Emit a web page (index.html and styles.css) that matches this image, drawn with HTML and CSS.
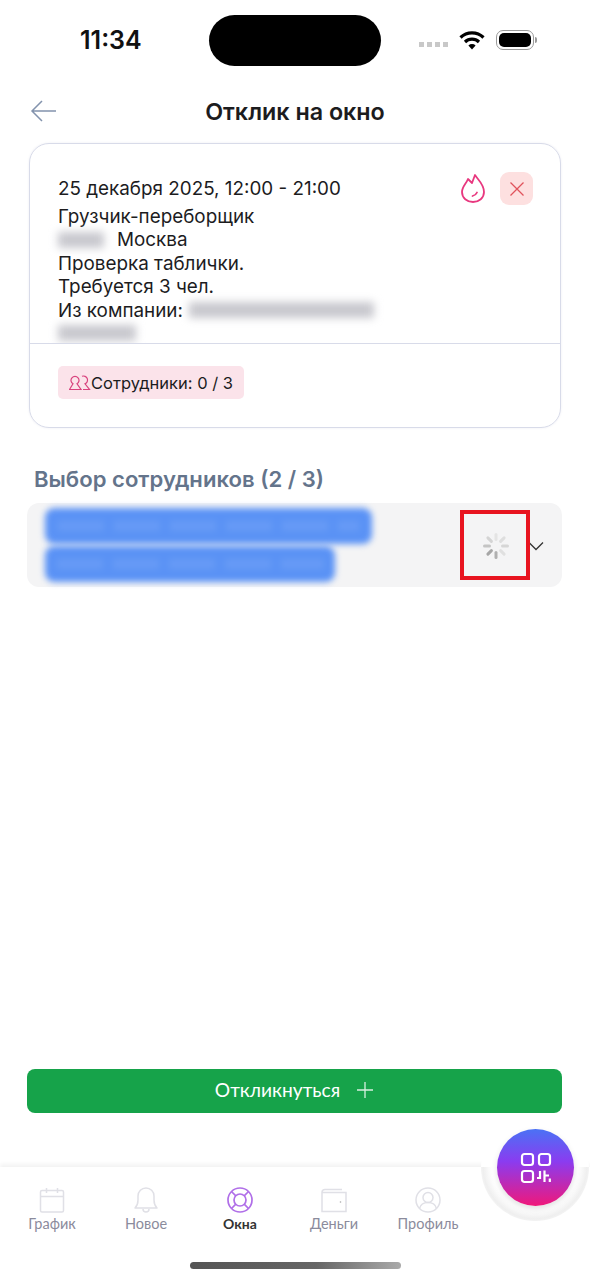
FILE: index.html
```html
<!DOCTYPE html>
<html lang="ru">
<head>
  <meta charset="UTF-8" />
  <meta name="viewport" content="width=device-width, initial-scale=1.0"/>
  <title>Отклик на окно</title>
  <link rel="stylesheet" href="styles.css">
</head>
<body>
  <div class="screen">
    <div class="status-bar">
      <span class="time">11:34</span>
      <div class="island"></div>
      <div class="status-icons">
        <div class="signal"><i></i><i></i><i></i><i></i></div>
        <svg class="wifi" width="26" height="19" viewBox="0 0 26 19">
          <path d="M1.500 6.500a16.500 16.500 0 0 1 23 0" fill="none" stroke="#000" stroke-width="3.200"/>
          <path d="M6 11a10.200 10.200 0 0 1 14 0" fill="none" stroke="#000" stroke-width="3.200"/>
          <path d="M9.400 14.400a5.300 5.300 0 0 1 7.200 0L13 18.600z" fill="#000"/>
        </svg>
        <div class="battery"><div class="battery-fill"></div></div>
        <div class="battery-cap"></div>
      </div>
    </div>

    <div class="header">
      <svg class="back" width="27" height="24" viewBox="0 0 27 24">
        <path d="M26 12H2M12 2L2 12l10 10" fill="none" stroke="#8393ad" stroke-width="1.500"/>
      </svg>
      <h1>Отклик на окно</h1>
    </div>

    <div class="card">
      <div class="card-body">
        <div class="card-top">
          <div class="date">25 декабря 2025, 12:00 - 21:00</div>
          <div class="card-actions">
            <svg width="24" height="30" viewBox="0 0 24 30">
              <path d="M7 5l4 4 3-8c3 5 9 9 9 17 0 6-5 10-11 10S1 24 1 18c0-5 4-8 6-13z" fill="none" stroke="#e8387f" stroke-width="1.800" stroke-linejoin="round"/>
              <path d="M16 18.500c-.8 1.800-2.500 3-4.500 3.500" fill="none" stroke="#e8387f" stroke-width="1.800" stroke-linecap="round"/>
            </svg>
            <div class="close-btn">
              <svg width="16" height="16" viewBox="0 0 16 16">
                <path d="M1.500 1.500l13 13M14.500 1.500l-13 13" stroke="#e0535c" stroke-width="1.300" fill="none"/>
              </svg>
            </div>
          </div>
        </div>
        <div class="line">Грузчик-переборщик</div>
        <div class="line"><span class="blur blur-city"></span>Москва</div>
        <div class="line">Проверка таблички.</div>
        <div class="line">Требуется 3 чел.</div>
        <div class="line">Из компании:<span class="blur blur-company"></span></div>
        <div class="line line-cut"><span class="blur blur-company2"></span></div>
      </div>
      <div class="card-foot">
        <div class="chip">
          <svg width="22" height="16" viewBox="0 0 22 16">
            <g fill="none" stroke="#d9437e" stroke-width="1.200">
              <path d="M4 8.800a4 4 0 1 1 4 0l4 5.700H0.500z"/>
              <path d="M13 1.300a4 4 0 0 1 3 7.500l4.500 5.700H14"/>
            </g>
          </svg>
          <span>Сотрудники: 0 / 3</span>
        </div>
      </div>
    </div>

    <h2 class="section-title">Выбор сотрудников (2 / 3)</h2>

    <div class="select">
      <div class="tags">
        <div class="tag tag-first"></div>
        <div class="tag tag-second"></div>
      </div>
      <div class="spinner">
        <svg width="28" height="28" viewBox="0 0 28 28">
          <g stroke-width="3" stroke-linecap="round" fill="none">
            <path d="M14 2.500v5" stroke="#e4e4e4"/>
            <path d="M22.100 5.900l-3.500 3.500" stroke="#dedede"/>
            <path d="M25.500 14h-5" stroke="#d6d6d6"/>
            <path d="M22.100 22.100l-3.500-3.500" stroke="#e0e0e0"/>
            <path d="M14 25.500v-5" stroke="#b0b0b0"/>
            <path d="M5.900 22.100l3.500-3.500" stroke="#a6a6a6"/>
            <path d="M2.500 14h5" stroke="#c4c4c4"/>
            <path d="M5.900 5.900l3.500 3.500" stroke="#d4d4d4"/>
          </g>
        </svg>
      </div>
      <svg class="chevron" width="16" height="10" viewBox="0 0 16 10">
        <path d="M1 1.500l7 7 7-7" fill="none" stroke="#333" stroke-width="1.300"/>
      </svg>
      <div class="marker"></div>
    </div>

    <div class="spacer"></div>

    <button class="submit-btn">Откликнуться
      <svg width="18" height="18" viewBox="0 0 18 18">
        <path d="M9 1v16M1 9h16" stroke="#d8f0e0" stroke-width="1.300" fill="none"/>
      </svg>
    </button>

    <div class="tabbar">
      <div class="tab">
        <svg width="26" height="26" viewBox="0 0 26 26">
          <rect x="1.500" y="3.500" width="23" height="21.500" rx="1.500" fill="none" stroke="#e0e0e6" stroke-width="1.500"/>
          <path d="M1.500 9.500h23M7.500 1v5M18.500 1v5" fill="none" stroke="#e0e0e6" stroke-width="1.500"/>
        </svg>
        <span>График</span>
      </div>
      <div class="tab">
        <svg width="26" height="26" viewBox="0 0 26 26">
          <path d="M2 21c2-2 3-4 3-8V9a8 8 0 0 1 16 0v4c0 4 1 6 3 8z" fill="none" stroke="#e0e0e6" stroke-width="1.500" stroke-linejoin="round"/>
          <path d="M10 22c0 2 1.500 3 3 3s3-1 3-3" fill="none" stroke="#e0e0e6" stroke-width="1.500"/>
        </svg>
        <span>Новое</span>
      </div>
      <div class="tab tab-active">
        <svg width="26" height="26" viewBox="0 0 26 26">
          <circle cx="13" cy="13" r="12" fill="none" stroke="#b06fe8" stroke-width="1.700"/>
          <circle cx="13" cy="13" r="6" fill="none" stroke="#b06fe8" stroke-width="1.700"/>
          <path d="M4.500 4.500l4.300 4.300M21.500 4.500l-4.300 4.300M4.500 21.500l4.300-4.300M21.500 21.500l-4.300-4.300" stroke="#b06fe8" stroke-width="1.700"/>
        </svg>
        <span>Окна</span>
      </div>
      <div class="tab">
        <svg width="26" height="26" viewBox="0 0 26 26">
          <path d="M1 5.500c0-2 1-3 3-3h17M1 5.500v19h24v-19z" fill="none" stroke="#e0e0e6" stroke-width="1.500"/>
          <circle cx="19.500" cy="15" r=".8" fill="#aaa"/>
        </svg>
        <span>Деньги</span>
      </div>
      <div class="tab">
        <svg width="26" height="26" viewBox="0 0 26 26">
          <circle cx="13" cy="13" r="12" fill="none" stroke="#e0e0e6" stroke-width="1.500"/>
          <circle cx="13" cy="10.500" r="5" fill="none" stroke="#e0e0e6" stroke-width="1.500"/>
          <path d="M4.500 21.500c1-4 4-6 8.500-6s7.500 2 8.500 6" fill="none" stroke="#e0e0e6" stroke-width="1.500"/>
        </svg>
        <span>Профиль</span>
      </div>
      <div class="fab-ring"></div>
      <div class="fab">
        <svg width="32" height="32" viewBox="0 0 32 32">
          <g fill="none" stroke="#fff" stroke-width="2.200">
            <rect x="2" y="2" width="11" height="11" rx="2.500"/>
            <rect x="19" y="2" width="11" height="11" rx="2.500"/>
            <rect x="2" y="19" width="11" height="11" rx="2.500"/>
            <path d="M20 19v7h-3M24.500 18.500V30M24.500 23.500H29M29.800 26.500V30"/>
          </g>
        </svg>
      </div>
    </div>

    <div class="home-bar"></div>
  </div>
</body>
</html>
```

FILE: styles.css
```css
* {
  box-sizing: border-box;
  margin: 0;
  padding: 0;
}

body {
  font-family: 'Inter', 'Noto Sans', sans-serif;
  background: #fff;
  color: #1c1c1e;
}

.screen {
  width: 590px;
  height: 1280px;
  display: flex;
  flex-direction: column;
  overflow: hidden;
  background: #fff;
}

.status-bar {
  height: 90px;
  flex: none;
  display: flex;
  align-items: flex-start;
  padding: 15px 0 0 80px;
}

.time {
  width: 129px;
  padding-top: 8px;
  font-size: 25px;
  font-weight: 600;
  line-height: 34px;
  color: #111;
}

.island {
  width: 172px;
  height: 51px;
  border-radius: 26px;
  background: #000;
}

.status-icons {
  display: flex;
  align-items: center;
  margin-left: 38px;
  padding-top: 15px;
}

.signal {
  display: flex;
  gap: 3px;
  margin-top: 8px;
  margin-right: 11px;
}

.signal i {
  display: block;
  width: 5px;
  height: 5px;
  background: #c8c8c8;
}

.battery {
  width: 38px;
  height: 20px;
  margin-left: 11px;
  border: 1px solid #9a9a9a;
  border-radius: 7px;
  padding: 2px;
}

.battery-fill {
  width: 100%;
  height: 100%;
  border-radius: 5px;
  background: #000;
}

.battery-cap {
  width: 2px;
  height: 6px;
  margin-left: 1px;
  border-radius: 0 2px 2px 0;
  background: #9a9a9a;
}

.header {
  height: 44px;
  flex: none;
  display: flex;
  align-items: center;
  justify-content: center;
  position: relative;
  margin-bottom: 9px;
}

.header h1 {
  font-size: 23.300px;
  font-weight: 600;
  margin-top: -2px;
  color: #1c1c1e;
}

.back {
  position: absolute;
  left: 30px;
  top: 9px;
}

.card {
  width: 532px;
  height: 285px;
  flex: none;
  margin-left: 29px;
  border: 1px solid #d8dbe9;
  border-radius: 20px;
  display: flex;
  flex-direction: column;
  box-shadow: 0 0 2px rgba(120,120,170,0.15);
}

.card-body {
  height: 200px;
  flex: none;
  padding: 33px 27px 0 28px;
  border-bottom: 1px solid #d8dbe9;
  overflow: hidden;
}

.card-top {
  display: flex;
  justify-content: space-between;
  align-items: flex-start;
  height: 28px;
}

.date {
  font-size: 18.850px;
  line-height: 24px;
}

.card-actions {
  display: flex;
  align-items: center;
  gap: 15px;
  margin-top: -5px;
}

.close-btn {
  width: 33px;
  height: 33px;
  border-radius: 9px;
  background: #fde0e0;
  display: flex;
  align-items: center;
  justify-content: center;
}

.line {
  font-size: 18.850px;
  line-height: 23.400px;
  display: flex;
  align-items: center;
}

.line-cut {
  height: 21px;
}

.blur {
  display: block;
  height: 16px;
  background: #c8c8ce;
  filter: blur(4px);
}

.blur-city {
  width: 46px;
  margin-right: 13px;
}

.blur-company {
  width: 185px;
  margin-left: 6px;
}

.blur-company2 {
  width: 78px;
}

.card-foot {
  padding: 22px 28px 0;
}

.chip {
  display: inline-flex;
  align-items: center;
  height: 33px;
  padding: 0 11px;
  background: #fbe3ea;
  border-radius: 5px;
  font-size: 16.500px;
}

.section-title {
  margin: 39px 0 0 34px;
  height: 24px;
  font-size: 22.100px;
  line-height: 24px;
  font-weight: 600;
  color: #64748b;
}

.select {
  width: 535px;
  height: 84px;
  flex: none;
  margin: 12px 0 0 27px;
  background: #f4f4f5;
  border-radius: 12px;
  display: flex;
  align-items: center;
  padding-left: 18px;
  position: relative;
}

.tags {
  width: 415px;
  display: flex;
  flex-direction: column;
  gap: 2px;
}

.tag {
  height: 36px;
  border-radius: 9px;
  background-color: #5a92f5;
  background-image: repeating-linear-gradient(90deg, rgba(255,255,255,0.08) 0 46px, rgba(255,255,255,0) 46px 56px);
  background-size: 92% 10px;
  background-position: center;
  background-repeat: no-repeat;
  filter: blur(3px);
}

.tag-first {
  width: 327px;
}

.tag-second {
  width: 290px;
}

.spinner {
  width: 28px;
  height: 28px;
  margin: 2px 0 0 22px;
}

.chevron {
  margin: 2px 0 0 18px;
}

.marker {
  position: absolute;
  left: 433px;
  top: 7px;
  width: 70px;
  height: 70px;
  border: 4px solid #e8141f;
}

.spacer {
  flex: 1;
}

.submit-btn {
  width: 535px;
  height: 44px;
  flex: none;
  margin: 0 0 54px 27px;
  padding-bottom: 3px;
  border: none;
  border-radius: 8px;
  background: #16a34a;
  color: #fff;
  font-family: 'Lato', sans-serif;
  font-size: 19.200px;
  display: flex;
  align-items: center;
  justify-content: center;
  gap: 16px;
}

.tabbar {
  height: 95px;
  flex: none;
  position: relative;
  display: flex;
  padding: 20px 0 0 5px;
  box-shadow: 0 -3px 4px rgba(0,0,0,0.05);
}

.tab {
  width: 94px;
  display: flex;
  flex-direction: column;
  align-items: center;
  gap: 2px;
  font-family: 'Lato', sans-serif;
  font-size: 14.500px;
  line-height: 17px;
  color: #8b8b9c;
}

.tab-active {
  color: #333;
  font-size: 14px;
  font-weight: 700;
}

.fab-ring {
  position: absolute;
  left: 481px;
  top: -54px;
  width: 108px;
  height: 108px;
  border-radius: 50%;
  background: linear-gradient(#fff 50%, rgba(255,255,255,0) 50%), radial-gradient(circle closest-side, #fff 80%, #efefef 96%, #f3f3f3 100%);
}

.fab {
  position: absolute;
  left: 497px;
  top: -38px;
  width: 77px;
  height: 77px;
  border-radius: 50%;
  background: linear-gradient(180deg, #4a72f5 0%, #8a3cf0 42%, #f0187a 100%);
  box-shadow: 0 3px 6px rgba(0,0,0,0.12);
  display: flex;
  align-items: center;
  justify-content: center;
}

.home-bar {
  width: 211px;
  height: 7px;
  flex: none;
  margin: 0 0 11px 190px;
  border-radius: 4px;
  background: linear-gradient(90deg, #555 0%, #666 60%, #aaa 100%);
}
```
